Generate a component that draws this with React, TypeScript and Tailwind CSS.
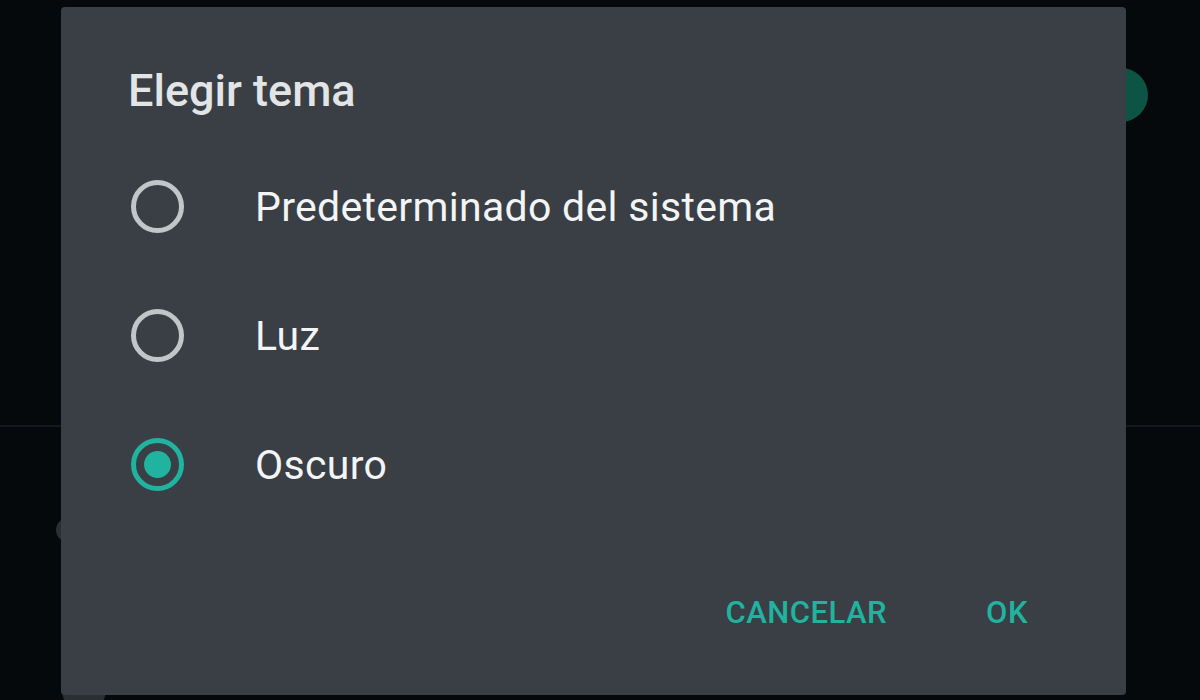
import * as React from "react";

const OPTIONS = [
    { id: "system", label: "Predeterminado del sistema" },
    { id: "light", label: "Luz" },
    { id: "dark", label: "Oscuro" },
];

function Radio({ checked }: { checked: boolean }) {
    return (
        <div
            className={
                checked
                    ? "w-[53px] h-[53px] shrink-0 rounded-full border-[5px] border-[#1fb3a0] flex items-center justify-center"
                    : "w-[53px] h-[53px] shrink-0 rounded-full border-[5px] border-[#c3c6c9]"
            }
        >
            {checked && <div className="w-[27px] h-[27px] rounded-full bg-[#1fb3a0]" />}
        </div>
    );
}

export default function App() {
    const [theme, setTheme] = React.useState("dark");

    return (
        <div
            className="relative w-[1200px] h-[700px] overflow-hidden bg-[#06090c]"
            style={{ fontFamily: "Roboto, 'Noto Sans', sans-serif" }}
        >
            {/* page behind the dialog */}
            <div className="absolute left-0 right-0 top-[425px] h-[2px] bg-[#15191d]" />
            <div className="absolute left-[1094px] top-[68px] w-[54px] h-[54px] rounded-full bg-[#0d5446]" />
            <div className="absolute left-[56px] top-[518px] w-[24px] h-[24px] rounded-full bg-[#2a2f34]" />
            <div className="absolute left-[62px] top-[668px] w-[44px] h-[44px] rounded-full bg-[#2a2f34]" />

            {/* dialog */}
            <div className="absolute left-[61px] top-[7px] w-[1065px] h-[688px] rounded-[4px] bg-[#393f44] flex flex-col pt-[57px] pl-[67px] pr-[98px]">
                <h2 className="text-[45px] leading-[54px] font-medium text-[#e2e4e6]">Elegir tema</h2>

                <div className="mt-[24px] flex flex-col">
                    {OPTIONS.map((o) => (
                        <button
                            key={o.id}
                            type="button"
                            onClick={() => setTheme(o.id)}
                            className="h-[129px] flex items-center text-left"
                        >
                            <div className="ml-[3px]">
                                <Radio checked={theme === o.id} />
                            </div>
                            <span className="ml-[71px] text-[41px] leading-[48px] tracking-[0.3px] text-[#f3f4f5]">
                                {o.label}
                            </span>
                        </button>
                    ))}
                </div>

                <div className="mt-[54px] h-[60px] flex items-center justify-end gap-[99px]">
                    <button type="button" className="text-[31px] font-medium text-[#1fb3a0] tracking-[0.5px]">
                        CANCELAR
                    </button>
                    <button type="button" className="text-[31px] font-medium text-[#1fb3a0] tracking-[0.5px]">
                        OK
                    </button>
                </div>
            </div>
        </div>
    );
}
